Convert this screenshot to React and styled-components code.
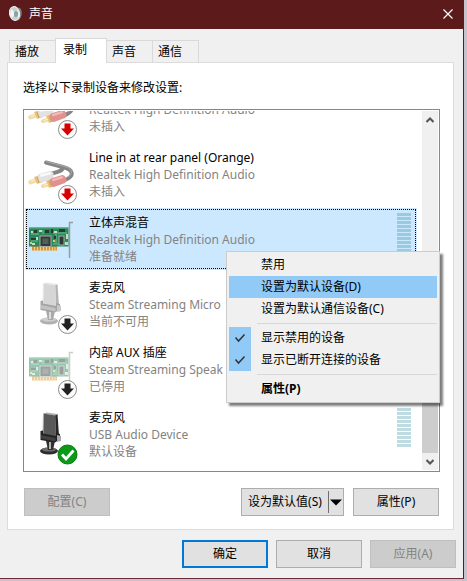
import React from "react";
import styled, { createGlobalStyle, css } from "styled-components";

const Global = createGlobalStyle`
  * { box-sizing: border-box; }
  body {
    margin: 0;
    background: #c6c3cc;
    color: #000;
    font: 12px/17px "Noto Sans", "Noto Sans CJK SC", sans-serif;
  }
  button { font: inherit; color: inherit; margin: 0; padding: 0; }
`;

const Window = styled.main`
  margin: 0 3px 2px 0;
  background: #f0f0f0;
  border-right: 1px solid #5c1c1b;
  border-bottom: 1px solid #6f2b32;
`;

const TitleBar = styled.header`
  display: flex;
  align-items: center;
  height: 29px;
  padding: 0 10px 2px 9px;
  gap: 6px;
  background: #5c1b1a;
  color: #fff;
`;

const Title = styled.h1`
  flex: 1;
  margin: 0;
  font-size: 12px;
  font-weight: 400;
`;

const CloseButton = styled.button`
  display: flex;
  border: 0;
  background: none;
`;

const Tabs = styled.div`
  display: flex;
  align-items: flex-end;
  padding: 9px 0 0 9px;
`;

const Tab = styled.button`
  width: 47px;
  height: 22px;
  border: 1px solid #d9d9d9;
  border-bottom: 0;
  background: #f0f0f0;
  text-align: left;
  padding-left: 5px;
  & + & { margin-left: -1px; }
  ${(p) => p["aria-selected"] && css`
    position: relative;
    width: 52px;
    height: 25px;
    margin-bottom: -1px;
    padding: 0 0 3px 7px;
    background: #fff;
  `}
`;

const Panel = styled.section`
  margin: 0 9px 0 7px;
  padding: 16px 13px 13px 15px;
  border: 1px solid #dcdcdc;
  background: #fff;
`;

const Prompt = styled.p`
  margin: 0 0 13px;
`;

const ListArea = styled.div`
  position: relative;
`;

const ListFrame = styled.div`
  display: flex;
  height: 363px;
  padding: 1px;
  border: 1px solid #828790;
`;

const DeviceList = styled.ul`
  flex: 1;
  min-width: 0;
  display: flex;
  flex-direction: column;
  justify-content: flex-end;
  gap: 3px;
  margin: 0;
  padding: 0 5px 5px 0;
  list-style: none;
  overflow: hidden;
`;

const Device = styled.li`
  flex: none;
  display: flex;
  height: 62px;
  padding-right: 6px;
  background: ${(p) => (p["aria-selected"] ? "#cce8ff" : "#fff")};
  outline: ${(p) => (p["aria-selected"] ? "1px dotted #000" : "none")};
  outline-offset: -2px;
`;

const DeviceIcon = styled.svg`
  flex: none;
  width: 60px;
  height: 62px;
`;

const DeviceText = styled.div`
  flex: 1;
  min-width: 0;
  display: flex;
  flex-direction: column;
  justify-content: flex-end;
  padding: 0 0 5px 4px;
  white-space: nowrap;
`;

const DeviceName = styled.div`
  color: #000;
`;

const DeviceDetail = styled.div`
  color: #838383;
`;

const Meter = styled.div`
  display: grid;
  align-content: start;
  gap: 1px;
  width: 14px;
  padding-top: 5px;
`;

const MeterBar = styled.span`
  height: 3px;
  background: ${(p) => (p.$strong ? "#99cae0" : "#c0dce3")};
`;

const ScrollBar = styled.div`
  display: flex;
  flex-direction: column;
  width: 16px;
  background: #f0f0f0;
`;

const ScrollButton = styled.button`
  display: grid;
  place-items: center;
  height: 17px;
  border: 0;
  background: #f0f0f0;
`;

const ScrollTrack = styled.div`
  flex: 1;
  display: flex;
  align-items: flex-end;
`;

const ScrollThumb = styled.div`
  width: 100%;
  height: 85%;
  max-height: 190px;
  background: #cdcdcd;
`;

const ContextMenu = styled.div`
  position: absolute;
  top: 142px;
  right: 0;
  width: 214px;
  padding: 2px;
  border: 1px solid #ccc;
  background: #f0f0f0;
  box-shadow: 3px 3px 2px rgba(0, 0, 0, 0.5);
`;

const MenuItem = styled.button`
  display: grid;
  grid-template-columns: 22px 1fr;
  column-gap: 10px;
  align-items: center;
  width: 100%;
  height: 22px;
  border: 0;
  text-align: left;
  font-weight: ${(p) => (p.$bold ? 700 : 400)};
  background: ${(p) => (p.$active ? "#91c9f7" : "none")};
`;

const MenuCheck = styled.span`
  display: grid;
  place-items: center;
  height: 22px;
  background: ${(p) => (p.$on ? "#91c9f7" : "none")};
`;

const MenuLabel = styled.span`
  padding-bottom: 2px;
`;

const MenuLine = styled.hr`
  margin: 3px 0 3px 28px;
  border: 0;
  height: 1px;
  background: #d7d7d7;
`;

const ButtonRow = styled.div`
  display: flex;
  justify-content: flex-end;
  gap: ${(p) => (p.$footer ? "8px" : "9px")};
  padding: ${(p) => (p.$footer ? "10px 7px" : "16px 1px 0")};
`;

const PushButton = styled.button`
  width: 86px;
  height: 28px;
  padding-bottom: 2px;
  border: 1px solid #adadad;
  background: #e1e1e1;
  ${(p) => p.$primary && css`border: 2px solid #0078d7;`}
  ${(p) => p.$start && css`margin-right: auto;`}
  &:disabled {
    border-color: #bfbfbf;
    background: #ccc;
    color: #838383;
  }
`;

const SplitButton = styled.div`
  display: flex;
  align-items: center;
  height: 28px;
  border: 1px solid #adadad;
  background: #e1e1e1;
`;

const SplitMain = styled.button`
  width: 86px;
  padding-bottom: 2px;
  border: 0;
  background: none;
  white-space: nowrap;
`;

const SplitArrow = styled.button`
  display: grid;
  place-items: center;
  width: 15px;
  height: 22px;
  border: 0;
  border-left: 1px solid #6e6e6e;
  background: none;
`;

function DownBadge({ color }) {
  return (
    <g>
      <circle cx="42.5" cy="51.5" r="9" fill="#fcfcfc" stroke="#8c8c8c" />
      <path d="M39.500 45.500h6v5h3.500l-6.500 7-6.500-7h3.500z" fill={color} />
    </g>
  );
}

function CheckBadge() {
  return (
    <g>
      <circle cx="42.500" cy="51.500" r="9.500" fill="#0b9a16" stroke="#067d10" />
      <path d="M37 51.500l4 4.500 7.500-8.500" fill="none" stroke="#fff" strokeWidth="2.800" />
    </g>
  );
}

function Cables() {
  return (
    <g>
      <path d="M21 19.500l17 4.500c11 3 12 9 1 13.500M38 24c0 4-5 5-11 6.500" fill="none" stroke="#858585" strokeWidth="4" strokeLinecap="round" />
      <path d="M21 18.500l17 4.500c9 2 11 7 5 11" fill="none" stroke="#aaa" />
      <path d="M4 37.500l7-2.500 1.500 4-7 2.500c-2 .5-3-3-1.500-4z" fill="#f2dba9" />
      <path d="M9 34l6-2 3 7-6 2z" fill="#e9c27d" />
      <path d="M14 31l11-3c4 0 5 6 2 8l-10 3.500c-4 0-5-7-3-8.500z" fill="#e2e2e2" />
      <path d="M15 31.500l10-2.500 1.500 2-11 3z" fill="#fafafa" />
      <path d="M17 41.500l8-3 1.500 4-8 2.500c-3 .5-3-3-1.500-3.500z" fill="#f2dba9" />
      <path d="M21 38l5-2 4 7-6 2z" fill="#e9c27d" />
      <path d="M26 35.500l11-3.500c4 0 6 6 3 8l-11 4c-4 0-5-7-3-8.500z" fill="#e0918f" />
      <path d="M27 36l10-3 1.500 2-11 3.500z" fill="#f0bab7" />
      <path d="M6 38.500l4-1.500M19 42.500l4-1.500" stroke="#fff2ce" />
      <path d="M12 34l2 6M24 38l2.500 6" stroke="#c9a25e" />
    </g>
  );
}

function SoundCard({ faded }) {
  return (
    <g opacity={faded ? 0.48 : 1}>
      <path d="M48 14.500h-3.500V50" fill="none" stroke="#9b9b9b" strokeWidth="1.500" />
      <path d="M7 38h25v4.500H7z" fill="#d7933c" />
      <path d="M9.500 39v4M12.500 39v4M15.500 39v4M18.500 39v4M21.500 39v4M24.500 39v4M27.500 39v4M30 39v4" stroke="#f2cf87" />
      <path d="M4 19.500h39.500v19H4z" fill="#27885a" />
      <path d="M4 20h39" stroke="#5ab183" />
      <path d="M6 26h8M6 33h7M28 25h14M28 36h5M18 26v-4M31 26v9" stroke="#75bd93" />
      <rect x="15" y="28" width="11" height="10.500" fill="#333a38" stroke="#a0b0a4" />
      <rect x="17.500" y="30.500" width="6" height="5.500" fill="#535d59" />
      <rect x="34" y="28" width="5" height="9" fill="#303936" stroke="#a1b1a5" />
      <path d="M6 30h5v2H6zM9 22h3v3H9zM20 22h4v3h-4zM26 21h2v4h-2zM34 21h6v3h-6zM29 28h2v3h-2z" fill="#263b32" />
      <path d="M6 23h2v2H6zM14 22h3v2h-3zM7 35h3v2H7zM11 29h2v3h-2zM29 23h3v2h-3zM41 26h2v5h-2zM40 34h3v3h-3z" fill="#cbd9c7" />
      <path d="M5 34h2v2H5zM28 32h2v2h-2z" fill="#e3c96e" />
    </g>
  );
}

function Microphone({ faded }) {
  const c = faded
    ? { base: "#b0b0b0", baseTop: "#cfcfcf", stem: "#a9a9a9", shine: "#dedede", side: "#b5b5b5", edge: "#e6e6e6", face: "#d6d6d6", holder: "#a4a4a4", band: "#c2c2c2", knob: "#c9c9c9" }
    : { base: "#2d2d2d", baseTop: "#6d6d6d", stem: "#303030", shine: "#b5b5b5", side: "#262626", edge: "#aeaeae", face: "#595959", holder: "#222", band: "#414141", knob: "#a8a8a8" };
  return (
    <g>
      <ellipse cx="24" cy="48" rx="9" ry="3.500" fill={c.base} />
      <ellipse cx="24" cy="46.500" rx="7" ry="2" fill={c.baseTop} />
      <path d="M21 38h9l-2 9h-5z" fill={c.stem} />
      <path d="M24 39h2v7h-2z" fill={c.shine} />
      <path d="M30 12l2.500-1 1.500 22-3 1z" fill={c.side} />
      <path d="M18.500 10.500l3-1 11 1.500-2 1.500z" fill={c.edge} />
      <path d="M18.500 10.500l12 2 .5 21-13-2z" fill={c.face} />
      <path d="M18.500 10.500l-.5 21" stroke={c.edge} />
      <path d="M15.500 28l2.500-.5v3l13 2.500v-3l4 1v5l-5 3.500-14.500-2.500z" fill={c.holder} />
      <path d="M16 32l14.500 3v3.500L16 35.500z" fill={c.band} />
      <path d="M32 32l4 1v5l-4 1z" fill={c.knob} />
    </g>
  );
}

const hd = "Realtek High Definition Audio";
const devices = [
  { detail: hd, state: "未插入", icon: <><Cables /><DownBadge color="#d90000" /></> },
  { name: "Line in at rear panel (Orange)", detail: hd, state: "未插入", icon: <><Cables /><DownBadge color="#d90000" /></> },
  { name: "立体声混音", detail: hd, state: "准备就绪", icon: <SoundCard />, selected: true, meter: true },
  { name: "麦克风", detail: "Steam Streaming Micro", state: "当前不可用", icon: <><Microphone faded /><DownBadge color="#222" /></> },
  { name: "内部 AUX 插座", detail: "Steam Streaming Speak", state: "已停用", icon: <><SoundCard faded /><DownBadge color="#222" /></> },
  { name: "麦克风", detail: "USB Audio Device", state: "默认设备", icon: <><Microphone /><CheckBadge /></>, meter: true },
];

const bars = Array.from({ length: 10 }, (_, i) => i);

function Chevron({ up }) {
  return (
    <svg width="8" height="6" viewBox="0 0 8 6">
      <path d={up ? "M.5 5L4 1.500 7.500 5" : "M.5 1L4 4.500 7.500 1"} fill="none" stroke="#555" strokeWidth="2" />
    </svg>
  );
}

function Item({ children, active, bold, checked }) {
  return (
    <MenuItem
      role={checked ? "menuitemcheckbox" : "menuitem"}
      aria-checked={checked ? true : undefined}
      $active={active}
      $bold={bold}
    >
      <MenuCheck $on={checked}>
        {checked && (
          <svg width="12" height="10" viewBox="0 0 12 10">
            <path d="M1.500 4.500l3 3.500L10.500 1.500" fill="none" stroke="#333" strokeWidth="1.500" />
          </svg>
        )}
      </MenuCheck>
      <MenuLabel>{children}</MenuLabel>
    </MenuItem>
  );
}

export default function App() {
  return (
    <>
      <Global />
      <Window>
        <TitleBar>
          <svg width="14" height="16" viewBox="0 0 14 16" aria-hidden="true">
            <path d="M6 1l5 1c3 3 2 9-1 12l-5 1z" fill="#777e7d" />
            <ellipse cx="5.500" cy="7.500" rx="5" ry="7" transform="rotate(-12 5.500 7.500)" fill="#c7d0cf" stroke="#edf2f0" />
            <path d="M3 3l3 5-3 4c-3-2-2-7 0-9z" fill="#f2f5f4" />
            <ellipse cx="7" cy="8" rx="2" ry="3" fill="#929f9f" />
            <path d="M8 4l2 3-1 5" fill="none" stroke="#eef3f2" />
          </svg>
          <Title>声音</Title>
          <CloseButton aria-label="关闭">
            <svg width="10" height="10" viewBox="0 0 10 10">
              <path d="M.5.5l9 9M9.500.5l-9 9" stroke="#fff" strokeWidth="1.200" />
            </svg>
          </CloseButton>
        </TitleBar>

        <Tabs role="tablist">
          <Tab role="tab" aria-selected={false}>播放</Tab>
          <Tab role="tab" aria-selected={true}>录制</Tab>
          <Tab role="tab" aria-selected={false}>声音</Tab>
          <Tab role="tab" aria-selected={false}>通信</Tab>
        </Tabs>

        <Panel role="tabpanel">
          <Prompt id="prompt">选择以下录制设备来修改设置:</Prompt>
          <ListArea>
            <ListFrame>
              <DeviceList role="listbox" aria-labelledby="prompt">
                {devices.map((d, i) => (
                  <Device key={i} role="option" aria-selected={!!d.selected}>
                    <DeviceIcon viewBox="0 0 60 62" aria-hidden="true">{d.icon}</DeviceIcon>
                    <DeviceText>
                      {d.name && <DeviceName>{d.name}</DeviceName>}
                      <DeviceDetail>{d.detail}</DeviceDetail>
                      <DeviceDetail>{d.state}</DeviceDetail>
                    </DeviceText>
                    {d.meter && (
                      <Meter>
                        {bars.map((b) => <MeterBar key={b} $strong={d.selected} />)}
                      </Meter>
                    )}
                  </Device>
                ))}
              </DeviceList>
              <ScrollBar>
                <ScrollButton aria-label="向上滚动"><Chevron up /></ScrollButton>
                <ScrollTrack><ScrollThumb /></ScrollTrack>
                <ScrollButton aria-label="向下滚动"><Chevron /></ScrollButton>
              </ScrollBar>
            </ListFrame>
            <ContextMenu role="menu">
              <Item>禁用</Item>
              <Item active>设置为默认设备(D)</Item>
              <Item>设置为默认通信设备(C)</Item>
              <MenuLine />
              <Item checked>显示禁用的设备</Item>
              <Item checked>显示已断开连接的设备</Item>
              <MenuLine />
              <Item bold>属性(P)</Item>
            </ContextMenu>
          </ListArea>
          <ButtonRow>
            <PushButton disabled $start>配置(C)</PushButton>
            <SplitButton>
              <SplitMain>设为默认值(S)</SplitMain>
              <SplitArrow aria-label="更多默认值选项">
                <svg width="12" height="7" viewBox="0 0 12 7"><path d="M0 .5h12L6 6.500z" /></svg>
              </SplitArrow>
            </SplitButton>
            <PushButton>属性(P)</PushButton>
          </ButtonRow>
        </Panel>

        <ButtonRow $footer>
          <PushButton $primary>确定</PushButton>
          <PushButton>取消</PushButton>
          <PushButton disabled>应用(A)</PushButton>
        </ButtonRow>
      </Window>
    </>
  );
}
